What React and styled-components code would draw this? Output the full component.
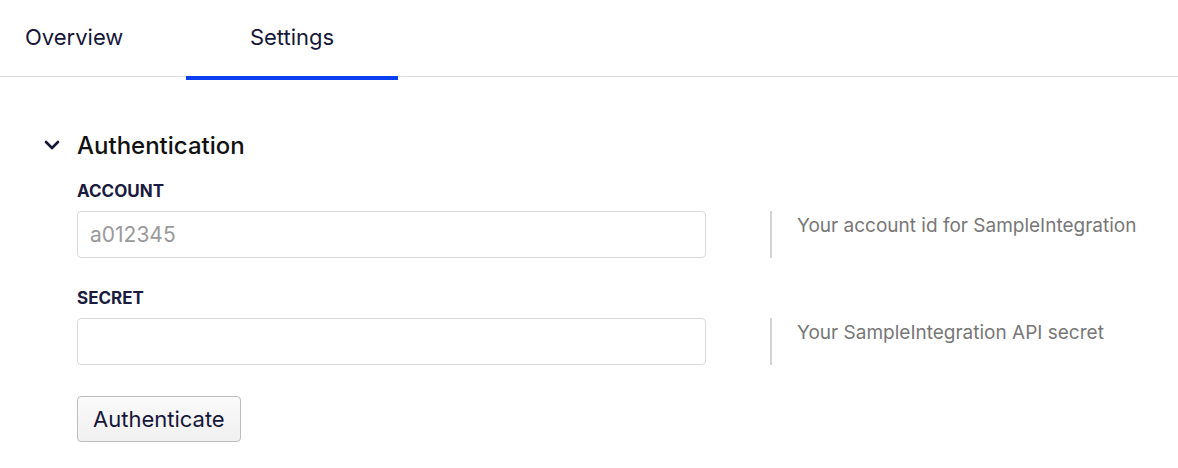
import React from 'react';
import styled, { createGlobalStyle } from 'styled-components';

const GlobalStyle = createGlobalStyle`
  body {
    margin: 0;
    background: #fff;
    font-family: Inter, "Noto Sans", sans-serif;
  }
`;

const Page = styled.div`
  width: 1178px;
  height: 468px;
  overflow: hidden;
`;

const TabList = styled.div`
  display: flex;
  height: 76px;
  border-bottom: 1px solid #dcdcdc;
`;

const Tab = styled.div`
  position: relative;
  width: ${(p) => p.$width}px;
  padding-left: ${(p) => p.$pad || 0}px;
  box-sizing: border-box;
  display: flex;
  align-items: center;
  justify-content: ${(p) => (p.$center ? 'center' : 'flex-start')};
  font-size: 22px;
  color: #16163a;
  padding-bottom: 2px;

  ${(p) =>
    p.$active &&
    `
    &::after {
      content: '';
      position: absolute;
      left: 0;
      right: 0;
      bottom: -4px;
      height: 4px;
      background: #0a3ff0;
    }
  `}
`;

const Content = styled.div`
  padding: 53px 0 0 44px;
`;

const SectionHeader = styled.div`
  display: flex;
  align-items: center;
  gap: 17px;
  height: 30px;
`;

const Title = styled.h2`
  margin: 0;
  font-size: 24px;
  font-weight: 500;
  color: #111;
`;

const Form = styled.div`
  padding: 21px 0 0 33px;
  display: flex;
  flex-direction: column;
`;

const Field = styled.div`
  display: grid;
  grid-template-columns: 629px 64px 2px 25px auto;
  grid-template-rows: auto 47px;
  margin-bottom: 30px;
`;

const Label = styled.label`
  grid-column: 1 / -1;
  font-size: 17px;
  font-weight: 700;
  color: #1b1b40;
  margin-bottom: 9px;
  line-height: 21px;
`;

const Input = styled.input`
  grid-column: 1;
  box-sizing: border-box;
  height: 47px;
  border: 1px solid #d9d9d9;
  border-radius: 4px;
  padding: 0 12px;
  font-family: inherit;
  font-size: 21px;
  color: #222;
  outline: none;

  &::placeholder {
    color: #9a9a9a;
  }
`;

const Rule = styled.div`
  grid-column: 3;
  background: #d4d4d4;
`;

const Help = styled.div`
  grid-column: 5;
  font-size: 19px;
  color: #777;
  padding-top: 3px;
`;

const Button = styled.button`
  align-self: flex-start;
  margin-top: 1px;
  height: 46px;
  padding: 0 15px;
  font-family: inherit;
  font-size: 22px;
  color: #16163a;
  background: linear-gradient(#fafafa, #f0f0f0);
  border: 1px solid #bdbdbd;
  border-radius: 4px;
`;

const Chevron = () => (
  <svg width="16" height="10" viewBox="0 0 16 10" fill="none">
    <path d="M2 2l6 6 6-6" stroke="#16163a" strokeWidth="2.6" strokeLinecap="round" strokeLinejoin="round" />
  </svg>
);

const fields = [
  { name: 'ACCOUNT', placeholder: 'a012345', help: 'Your account id for SampleIntegration' },
  { name: 'SECRET', placeholder: '', help: 'Your SampleIntegration API secret' },
];

const App = () => (
  <Page>
    <GlobalStyle />
    <TabList>
      <Tab $width={186} $pad={25}>Overview</Tab>
      <Tab $width={212} $center $active>Settings</Tab>
    </TabList>
    <Content>
      <SectionHeader>
        <Chevron />
        <Title>Authentication</Title>
      </SectionHeader>
      <Form>
        {fields.map((f) => (
          <Field key={f.name}>
            <Label>{f.name}</Label>
            <Input placeholder={f.placeholder} />
            <Rule />
            <Help>{f.help}</Help>
          </Field>
        ))}
        <Button>Authenticate</Button>
      </Form>
    </Content>
  </Page>
);

export default App;
